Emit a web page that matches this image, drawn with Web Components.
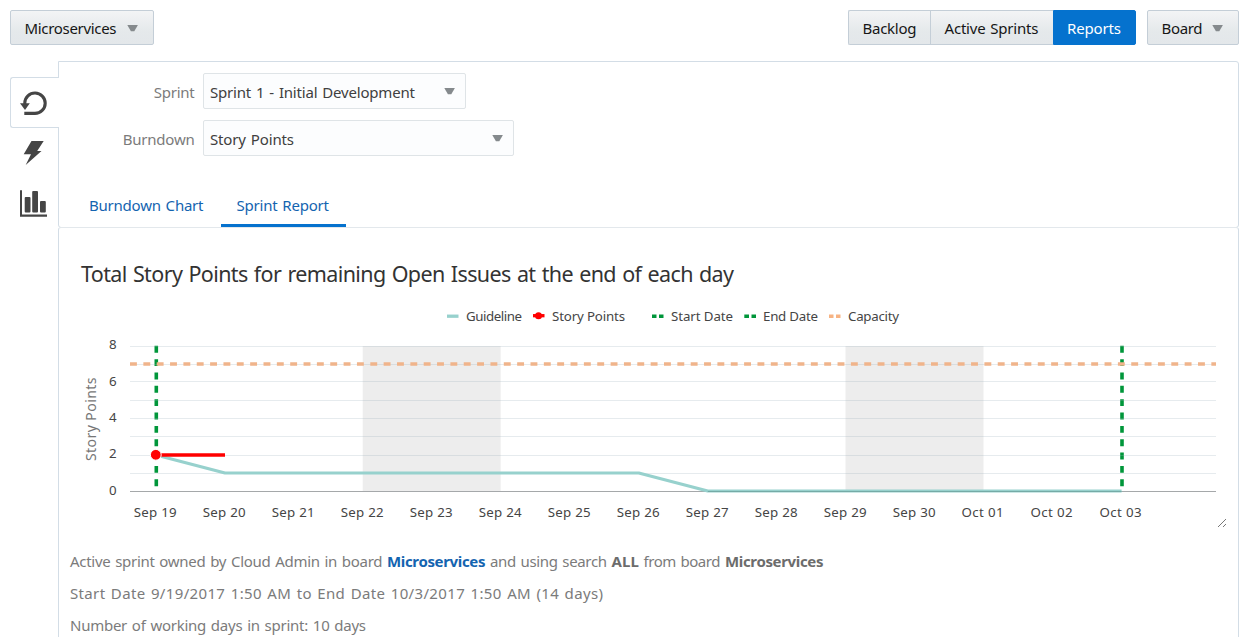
<!DOCTYPE html>
<html lang="en">
<head>
<meta charset="utf-8">
<title>Sprint Report</title>
<style>
html,body{margin:0;background:#fff;height:637px;overflow:hidden}
body{font-family:"Noto Sans","Open Sans",sans-serif;font-size:15px;color:#7b7b7b}
</style>
</head>
<body>
<agile-page></agile-page>
<script>
const define = (name, html, init) => customElements.define(name, class extends HTMLElement {
  connectedCallback() {
    if (this.shadowRoot) return;
    const t = document.createElement('template');
    t.innerHTML = typeof html === 'function' ? html(this) : html;
    this.attachShadow({mode: 'open'}).append(t.content.cloneNode(true));
    if (init) init(this);
  }
});

/* A single line of text, tracked to occupy the width given in its w attribute. */
define('ui-text', `<style>:host{display:inline-block;white-space:pre;word-spacing:1.2px}span{display:inline-block}</style><span><slot></slot></span>`, el => {
  const s = el.shadowRoot.querySelector('span'), w = +el.getAttribute('w');
  const n = s.getBoundingClientRect().width;
  el.style.letterSpacing = ((w - n) / (el.textContent.length - 1)) + 'px';
  el.style.width = w + 'px';
});

define('ui-caret', `<style>:host{display:block;width:11px;height:8px}svg{display:block}</style>
<svg width="11" height="8"><path d="M.3 1H10.9L7.3 7.3H3.9Z" fill="#858a8d"/></svg>`);

define('ui-button', `<style>
:host{display:flex;align-items:center;box-sizing:border-box;height:35px;padding:1px 14px 0 13.5px;border:1px solid #c4ced7;border-radius:2px;background:linear-gradient(#f3f4f5,#e5e9eb 60%,#e3e7ea);color:#161616}
:host([part-of=start]){border-radius:2px 0 0 2px;border-right:0}
:host([part-of=middle]){border-radius:0;border-right:0}
:host([selected]){background:#0572ce;border-color:#0572ce;color:#fff;border-radius:0 2px 2px 0}
:host([menu]){justify-content:space-between}
ui-caret{display:none;margin-top:-1px}
:host([menu]) ui-caret{display:block}
</style><slot></slot><ui-caret></ui-caret>`);

define('ui-select', `<style>
:host{display:flex;align-items:center;justify-content:space-between;box-sizing:border-box;height:36px;padding:1px 10px 0 6px;border:1px solid #dfe4e7;border-radius:2px;background:#fcfdfe;color:#404040}
ui-caret{margin-top:-1px}
</style><slot></slot><ui-caret></ui-caret>`);

define('app-toolbar', `<style>
:host{display:flex;justify-content:space-between;padding:10px 19px 0 10px;height:51px;box-sizing:border-box}
.right,.group{display:flex}.right{gap:11px}
</style>
<ui-button menu style="width:144px;padding-right:15px"><ui-text w="92">Microservices</ui-text></ui-button>
<div class="right"><div class="group">
<ui-button part-of="start" style="width:82px"><ui-text w="54">Backlog</ui-text></ui-button>
<ui-button part-of="middle" style="width:123px"><ui-text w="94">Active Sprints</ui-text></ui-button>
<ui-button selected style="width:83px;padding-left:13px"><ui-text w="54">Reports</ui-text></ui-button>
</div><ui-button menu style="width:92px;padding-right:15px"><ui-text w="41">Board</ui-text></ui-button></div>`);

define('side-nav', `<style>
:host{display:flex;flex-direction:column;width:49px;flex:none;margin:16px -1px 0 10px;position:relative;z-index:1}
div{box-sizing:border-box;height:51px;border:1px solid transparent;border-right:0}
.on{border-color:#d3dde6;border-radius:3px 0 0 3px;background:#fff}
svg{display:block}
</style>
<div class="on"><svg width="48" height="49"><g transform="translate(-11 -78)"><path d="M24.8 104V103A10.2 10.2 0 1 1 35 113.4H24.3" fill="none" stroke="#454545" stroke-width="3.1"/><path d="M20 103.2H29.8L25 110Z" fill="#454545"/></g></svg></div>
<div><svg width="48" height="49"><g transform="translate(-11 -129)"><path d="M31.5 141H43.7L37.2 151H41.5L25.7 165L31 154.3H23.7Z" fill="#454545"/></g></svg></div>
<div><svg width="48" height="49"><g transform="translate(-11 -180)" fill="#454545"><path d="M20 190.3H22V214.6H47V216.7H20Z"/><rect x="24.7" y="197" width="5.8" height="15.5" rx="1"/><rect x="32.2" y="191" width="5.8" height="21.5" rx="1"/><rect x="40" y="201" width="5.8" height="11.5" rx="1"/></g></svg></div>`);

define('filter-panel', `<style>
:host{display:flex;flex-direction:column;box-sizing:border-box;height:167px;border:1px solid #d3dde6;border-radius:0 3px 3px 3px}
.row{display:grid;grid-template-columns:135.5px auto;column-gap:8.5px;align-items:center;justify-content:start;height:36px;margin-bottom:11px}
.row:first-of-type{margin-top:11px}
.label{text-align:right;padding-top:1px}
.tabs{display:flex;margin-top:auto;color:#1464b0;padding-left:14px}
.tab{box-sizing:border-box;height:41px;border-bottom:3px solid transparent;padding:9px 17px 0 16px}
.tab.on{border-color:#0572ce}
</style>
<div class="row"><div class="label"><ui-text w="41">Sprint</ui-text></div><ui-select style="width:263px"><ui-text w="205">Sprint 1 - Initial Development</ui-text></ui-select></div>
<div class="row"><div class="label"><ui-text w="72">Burndown</ui-text></div><ui-select style="width:311px"><ui-text w="84">Story Points</ui-text></ui-select></div>
<div class="tabs"><div class="tab"><ui-text w="114.5">Burndown Chart</ui-text></div><div class="tab on"><ui-text w="92.5">Sprint Report</ui-text></div></div>`);

/* Burndown plot: one x step per day, one y step per story point. */
const X = d => 156 + d * 68.97, Y = v => 491.3 - v * 18.2;
const days = ['Sep 19','Sep 20','Sep 21','Sep 22','Sep 23','Sep 24','Sep 25','Sep 26','Sep 27','Sep 28','Sep 29','Sep 30','Oct 01','Oct 02','Oct 03'];
const txt = (x, y, w, s) => `<text x="${x}" y="${y}" textLength="${w}">${s}</text>`;
define('burndown-chart', () => `<style>
:host{display:block}svg{display:block}
text{font-size:13.3px;fill:#454545}
</style>
<svg width="1180" height="240" viewBox="59 300 1180 240">
<g>
${txt(466,321,56,'Guideline')}${txt(552,321,73,'Story Points')}${txt(671,321,62,'Start Date')}${txt(763,321,55,'End Date')}${txt(848,321,51,'Capacity')}
</g>
<path d="M447 316.2H458.5" stroke="#97d1cd" stroke-width="3.3"/>
<path d="M533 315.7H544.5" stroke="red" stroke-width="3.3"/><circle cx="538.5" cy="315.7" r="3.5" fill="red"/>
<path d="M652 316.2H656.5M659 316.2H663.5M744.3 316.2H749M751.5 316.2H756" stroke="#00963a" stroke-width="3.6"/>
<path d="M829 316.2H833.5M836 316.2H840.5" stroke="#f7b383" stroke-width="3.6"/>
<g stroke="#00963a" stroke-width="3.6" stroke-dasharray="6.9 6.45"><path d="M156.3 345.8V487"/><path d="M1122 345.8V487"/></g>
<path d="M362.7 346H500.7V491H362.7ZM845.5 346H983.5V491H845.5Z" fill="#000" fill-opacity=".07"/>
<path d="${[346,364,381,400,418,436,455,473].map(y => `M130 ${y + .5}H1216`).join('')}" stroke="#9fb0bd" stroke-opacity=".26"/>
<path d="M130 491.5H1216" stroke="#a5a8aa" stroke-width="1.2"/>
<path d="M130 364H1216" stroke="#f0b48b" stroke-width="3.6" stroke-dasharray="6.9 6.45"/>
<path d="M${X(0)} 455L${X(1)} 473H${X(7)}L${X(8)} 491H${X(14)}" fill="none" stroke="#97d1cd" stroke-width="3.2" stroke-linejoin="round"/>
<path d="M${X(8)} 491.5H${X(14)}" stroke="#75aaa6" stroke-width="1"/>
<path d="M156 455H225" stroke="red" stroke-width="3.5"/><circle cx="155.8" cy="454.8" r="5.4" fill="red" stroke="#fff"/>
${[0,2,4,6,8].map(v => `<text x="109" y="${Y(v) + 3.5}" textLength="8.5">${v}</text>`).join('')}
${days.map((d, i) => txt((133.7 + i * 69).toFixed(1) - (i > 11 ? .2 : 0), 517, i > 11 ? 42 : 43, d)).join('')}
<text transform="translate(95.5 461) rotate(-90)" textLength="83.5" style="font-size:14px;fill:#767676">Story Points</text>
<path d="M1218 527L1226 519M1223 527L1226 524" stroke="#777" stroke-width="1"/>
</svg>`);

define('report-panel', `<style>
:host{display:flex;flex-direction:column;box-sizing:border-box;height:440px;border:1px solid #d3dde6;border-top-color:#e3e8ec;border-bottom:0;border-radius:3px 3px 0 0;margin-top:-1px}
h2{font-size:21.5px;font-weight:400;color:#333;margin:0;padding:30px 0 0 22px;height:42px;line-height:32px}
p{margin:0;padding-left:11px;height:32.2px;line-height:32px;display:flex;gap:4.5px}
b{color:#6c6c6c}.link{color:#1464b0}
</style>
<h2><ui-text w="653">Total Story Points for remaining Open Issues at the end of each day</ui-text></h2>
<burndown-chart></burndown-chart>
<p style="margin-top:5px"><ui-text w="312.5">Active sprint owned by Cloud Admin in board</ui-text><b class="link"><ui-text w="98.5">Microservices</ui-text></b><ui-text w="117">and using search</ui-text><b><ui-text w="27.5">ALL</ui-text></b><ui-text w="77">from board</ui-text><b><ui-text w="98.5">Microservices</ui-text></b></p>
<p><ui-text w="533">Start Date 9/19/2017 1:50 AM to End Date 10/3/2017 1:50 AM (14 days)</ui-text></p>
<p><ui-text w="296">Number of working days in sprint: 10 days</ui-text></p>`);

define('agile-page', `<style>
:host{display:block;width:1258px;height:637px;overflow:hidden}
.body{display:flex;margin-top:10px}
main{width:1181px;flex:none}
</style>
<app-toolbar></app-toolbar>
<div class="body"><side-nav></side-nav><main><filter-panel></filter-panel><report-panel></report-panel></main></div>`);
</script>
</body>
</html>
